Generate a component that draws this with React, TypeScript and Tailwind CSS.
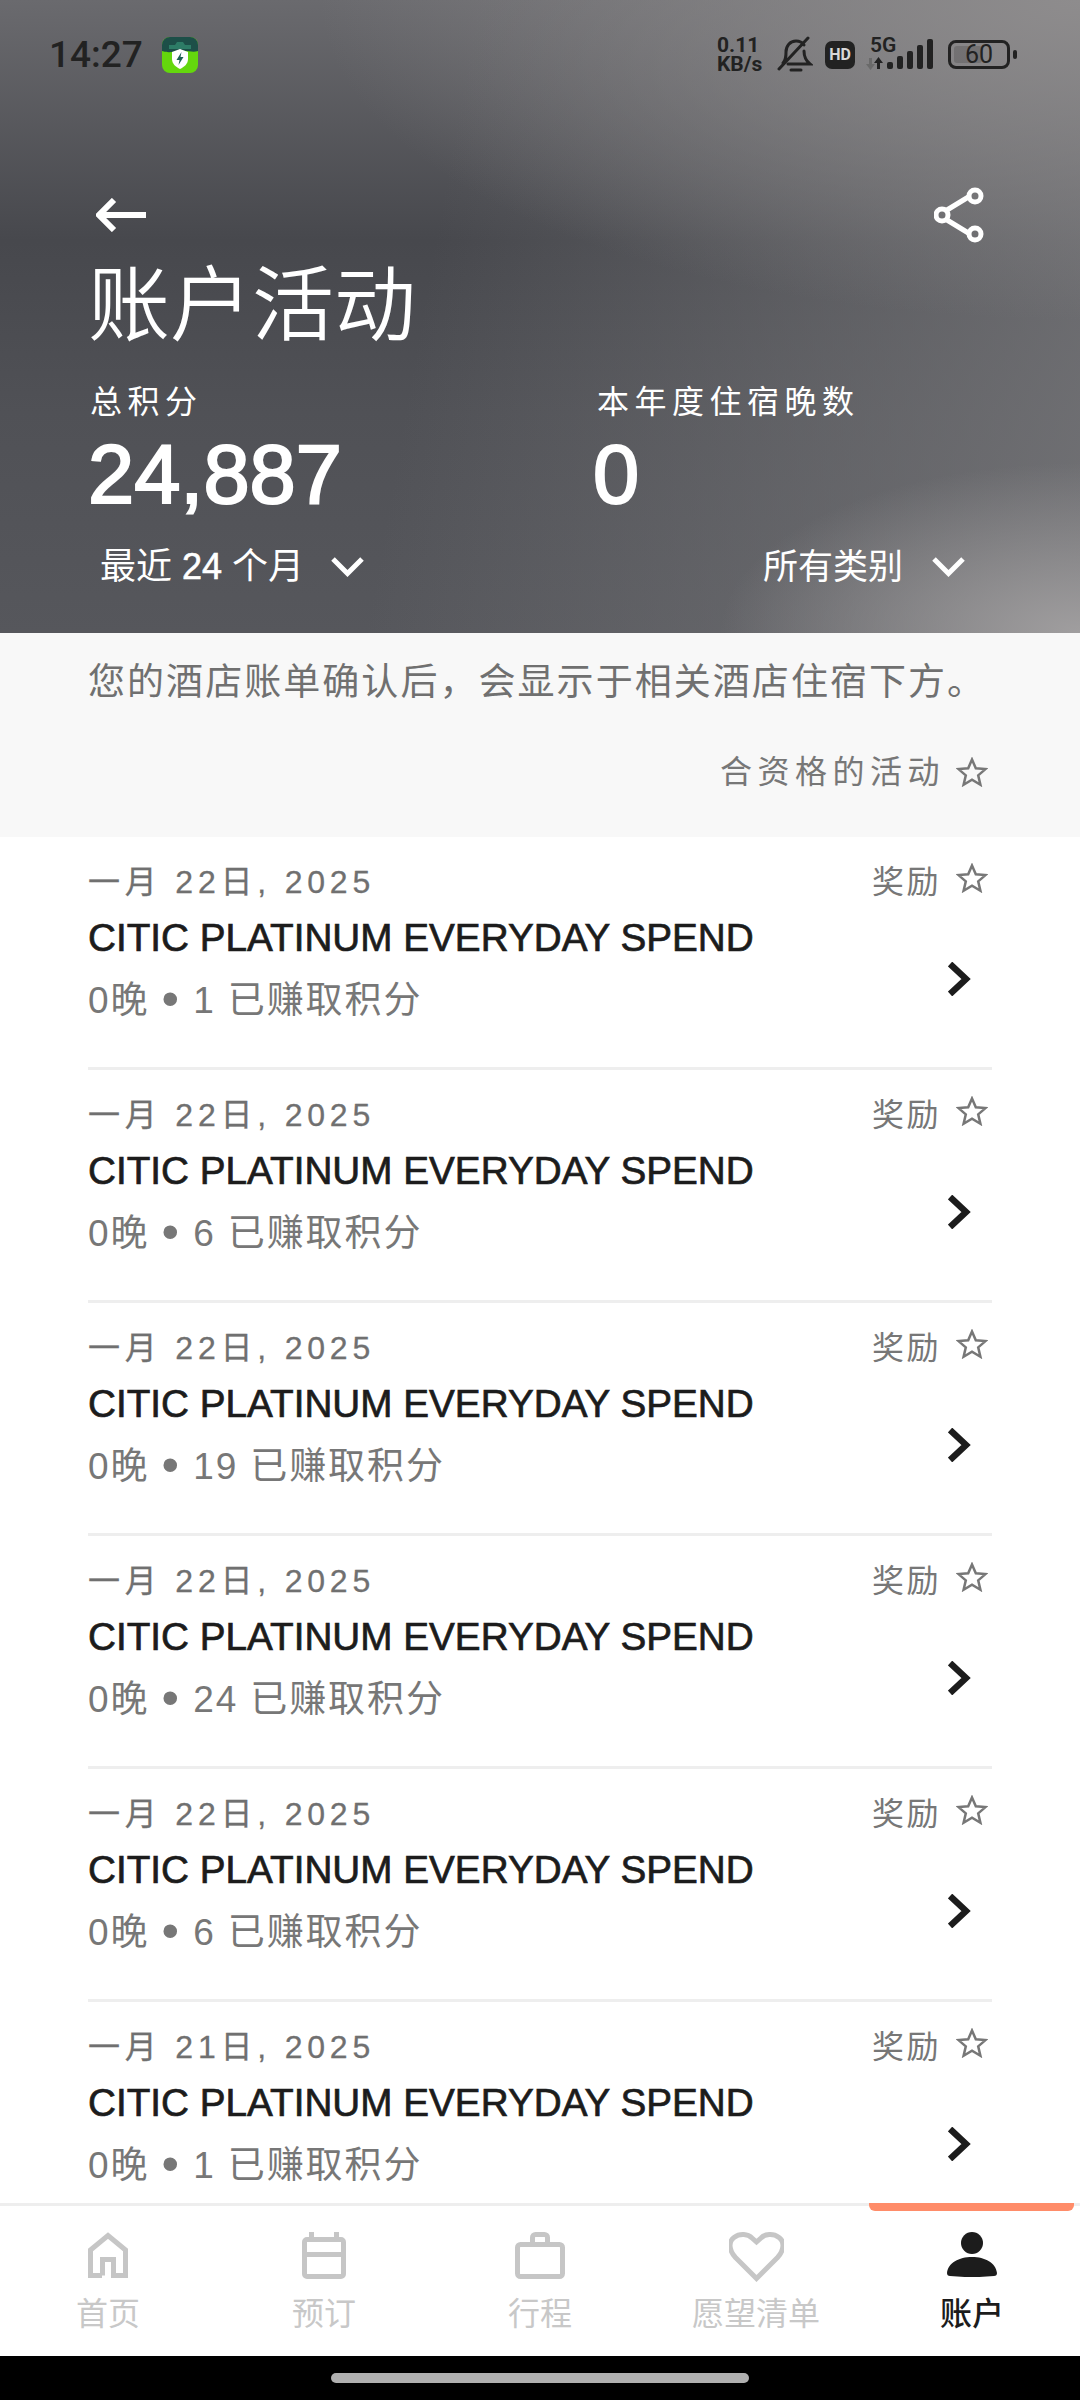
const activities = [
  { date: '一月 22日, 2025', points: 1 },
  { date: '一月 22日, 2025', points: 6 },
  { date: '一月 22日, 2025', points: 19 },
  { date: '一月 22日, 2025', points: 24 },
  { date: '一月 22日, 2025', points: 6 },
  { date: '一月 21日, 2025', points: 1 },
];

const tabs = [
  { label: '首页', icon: <HomeIcon /> },
  { label: '预订', icon: <CalendarIcon /> },
  { label: '行程', icon: <BagIcon /> },
  { label: '愿望清单', icon: <HeartIcon /> },
  { label: '账户', icon: <PersonIcon />, active: true },
];

function HomeIcon() {
  return (
    <svg width="40" height="46" viewBox="0 0 40 46" fill="none" stroke="#c6c6c6" strokeWidth="5">
      <path d="M14 43.5H2.5V18L20 3.5 37.5 18v25.5H25.500V27.500H14.500V43.500" />
    </svg>
  );
}

function CalendarIcon() {
  return (
    <svg width="44" height="47" viewBox="0 0 44 47" fill="none" stroke="#c6c6c6" strokeWidth="5">
      <rect x="2.500" y="7.500" width="39" height="37" rx="2.500" />
      <path d="M2 22.500h40M9.500 0v6M34.500 0v6" />
    </svg>
  );
}

function BagIcon() {
  return (
    <svg width="50" height="47" viewBox="0 0 50 47" fill="none" stroke="#c6c6c6" strokeWidth="5">
      <rect x="2.500" y="12.500" width="45" height="32" rx="3" />
      <path d="M17.500 11V5.500a3 3 0 0 1 3-3h9a3 3 0 0 1 3 3V11" />
    </svg>
  );
}

function HeartIcon() {
  return (
    <svg width="55" height="50" viewBox="0 0 55 50" fill="none" stroke="#c6c6c6" strokeWidth="5">
      <path d="M27.500 46.500 6.500 25.500C-.5 18-.5 9.500 5 5.500c6-4.500 14-3.500 18 .5l4.500 4 4.500-4c4-4 12-5 18-.5 5.500 4 5.500 12.500-1.500 20z" />
    </svg>
  );
}

function PersonIcon() {
  return (
    <svg width="50" height="45" viewBox="0 0 50 45" fill="#1c1c1c">
      <circle cx="25" cy="11" r="11" />
      <path d="M0 41C1 31 12 25 25 25s24 6 25 16c0 2-1 3-3 3-15 1.500-29 1.500-44 0-2 0-3-1-3-3z" />
    </svg>
  );
}

function Star({ color = '#777777' }: { color?: string }) {
  return (
    <svg width="32" height="30" viewBox="0 0 32 30" fill="none" stroke={color} strokeWidth="2.500" strokeLinejoin="miter">
      <path d="M16 2.500l3.800 8.800 9.700.8-7.300 6.300 2.200 9.300-8.400-5-8.400 5 2.200-9.300-7.300-6.300 9.700-.8z" />
    </svg>
  );
}

function Chevron() {
  return (
    <svg width="23" height="34" viewBox="0 0 23 34" fill="none" stroke="#1c1c1c" strokeWidth="6.500">
      <path d="M2 2l16 15L2 32" />
    </svg>
  );
}

function ChevronDown() {
  return (
    <svg width="33" height="20" viewBox="0 0 33 20" fill="none" stroke="#ffffff" strokeWidth="5">
      <path d="M2 2l14.500 14.500L31 2" />
    </svg>
  );
}

function StatusIcons() {
  return (
    <div className="flex items-center text-[#222222] font-['Roboto',sans-serif]">
      <div className="flex w-[49px] flex-col text-[21px] font-bold">
        <span className="h-[19px] leading-[19px]">0.11</span>
        <span className="h-[19px] leading-[19px]">KB/s</span>
      </div>
      <svg className="ml-[11px]" width="36" height="38" viewBox="0 0 36 38" fill="none" stroke="#222222" strokeWidth="3" strokeLinecap="round">
        <path d="M6 27c3-3 3-6 3-11 0-6 4-11 10-11 3 0 6 1 8 4M27 15c0 5 1 9 6 13H11M14 34h10M2 33 31 2" />
      </svg>
      <div className="ml-[12px] flex h-[28px] w-[30px] items-center justify-center rounded-[7px] bg-[#222222] text-[16px] font-bold text-[#d8d8d8]">
        HD
      </div>
      <div className="relative ml-[11px] h-[32px] w-[68px]">
        <span className="absolute top-[-4px] left-[4px] text-[21px] leading-[20px] font-semibold">5G</span>
        <svg className="absolute top-0 left-0" width="68" height="32" viewBox="0 0 68 32" fill="#222222">
          <path d="M3 19h3v6h3l-4.500 6L0 25h3z" fill="#6a6a6a" />
          <path d="M11 30h3v-6h3l-4.500-6L8 24h3z" />
          <rect x="21" y="23" width="6" height="7" rx="2" />
          <rect x="31" y="17" width="6" height="13" rx="2" />
          <rect x="41" y="12" width="6" height="18" rx="2" />
          <rect x="51" y="6" width="6" height="24" rx="2" />
          <rect x="61" y="0" width="6" height="30" rx="2" />
        </svg>
      </div>
      <div className="relative ml-[14px] flex h-[29px] w-[62px] items-center justify-center rounded-[8px] border-[3px] border-[#222222] text-[25px] font-normal">
        <div className="absolute top-[3px] bottom-[3px] left-[3px] w-[28px] rounded-[3px] bg-[#222222]/20" />
        <span className="relative">60</span>
      </div>
      <div className="ml-[3px] h-[9px] w-[4px] rounded-[2px] bg-[#222222]" />
    </div>
  );
}

function AppBadge() {
  return (
    <svg className="ml-[19px]" width="36" height="36" viewBox="0 0 36 36">
      <rect width="36" height="36" rx="8" fill="#64d70d" />
      <path d="M0 14V8a8 8 0 0 1 8-8h20a8 8 0 0 1 8 8v6c-6 2-10-1-18 0S6 16 0 14z" fill="#1d4f48" />
      <path d="M7 8h6l2-3h6l2 3h6v4H7z" fill="#2d7c66" />
      <path d="M18 12l8 3v7c0 5-4 8-8 10-4-2-8-5-8-10v-7z" fill="#ffffff" />
      <path d="M19.500 15l-5 8h3l-1 5 5-8h-3z" fill="#1d5f55" />
    </svg>
  );
}

function ActivityRow({ date, points }: { date: string; points: number }) {
  return (
    <div className="h-[233px] shrink-0 border-b-[3px] border-[#eeeeee] pt-[25px]">
      <div className="flex h-[40px] items-center justify-between">
        <span className="text-[32px] tracking-[4.800px] text-[#707070] [-webkit-text-stroke:0.3px_#707070]">{date}</span>
        <div className="flex items-center">
          <span className="text-[32px] tracking-[2.500px] text-[#777777]">奖励</span>
          <div className="mr-[4px] ml-[15px] -translate-y-[4px]">
            <Star />
          </div>
        </div>
      </div>
      <div className="flex items-center justify-between pr-[21px]">
        <div>
          <div className="mt-[12px] h-[48px] text-[38.700px] leading-[48px] font-normal text-[#1c1c1c] [-webkit-text-stroke:0.7px_#1c1c1c]">
            CITIC PLATINUM EVERYDAY SPEND
          </div>
          <div className="mt-[9px] h-[48px] text-[37px] leading-[48px] tracking-[1.900px] text-[#777777]">
            0晚 <span className="relative top-[3px] text-[50px] leading-none">•</span> {points} 已赚取积分
          </div>
        </div>
        <div className="mt-[37px]">
          <Chevron />
        </div>
      </div>
    </div>
  );
}

export default function App() {
  return (
    <div className="flex h-[2400px] w-[1080px] flex-col overflow-hidden bg-white font-['Liberation_Sans','Noto_Sans_CJK_SC',sans-serif]">
      {/* Header */}
      <div className="h-[633px] shrink-0 bg-[radial-gradient(ellipse_360px_170px_at_1080px_633px,#a09e9f_0%,#a09e9f00_100%),radial-gradient(ellipse_760px_320px_at_1080px_0px,#8e8c8d_0%,#8e8c8d00_100%),linear-gradient(100deg,#77777a00_40%,#77777acc_100%),linear-gradient(180deg,#6a6a6e_0%,#47484d_38%,#505156_65%,#56575c_100%)] text-white">
        <div className="flex h-[107px] items-center justify-between pt-[2px] pr-[63px] pl-[49px]">
          <div className="flex items-center">
            <span className="text-[37px] leading-none font-medium font-['Roboto',sans-serif] text-[#222222]">14:27</span>
            <AppBadge />
          </div>
          <StatusIcons />
        </div>

        <div className="mt-[78px] flex h-[60px] items-center justify-between pr-[96px] pl-[96px]">
          <svg width="50" height="34" viewBox="0 0 50 34" fill="none" stroke="#ffffff" strokeWidth="6">
            <path d="M50 17H4M18 2 3 17l15 15" />
          </svg>
          <svg width="50" height="56" viewBox="0 0 50 56" fill="none" stroke="#ffffff" strokeWidth="5">
            <path d="M13 23 36 9M13 33l23 14" />
            <circle cx="41" cy="9" r="6" />
            <circle cx="8" cy="28" r="6" />
            <circle cx="41" cy="47" r="6" />
          </svg>
        </div>

        <div className="mt-[11px] h-[97px] pl-[88px] text-[82px] leading-[100px] font-[350]">账户活动</div>

        <div className="mt-[29px] flex pl-[88px]">
          <div className="w-[509px]">
            <div className="h-[40px] pl-[2px] text-[32px] leading-[40px] tracking-[5.500px]">总积分</div>
            <div className="mt-[8px] h-[90px] text-[83px] leading-[90px] font-normal [-webkit-text-stroke:2.2px_#ffffff]">24,887</div>
          </div>
          <div>
            <div className="h-[40px] text-[32px] leading-[40px] tracking-[5.500px]">本年度住宿晚数</div>
            <div className="mt-[8px] -ml-[4px] h-[90px] text-[83px] leading-[90px] font-normal [-webkit-text-stroke:2.2px_#ffffff]">0</div>
          </div>
        </div>

        <div className="mt-[22px] flex h-[50px] items-center justify-between pr-[115px] pl-[100px]">
          <div className="flex items-center gap-[27px] text-[36px]">
            <span>
              最近 <span className="[-webkit-text-stroke:0.6px_#ffffff]">24</span> 个月
            </span>
            <ChevronDown />
          </div>
          <div className="flex items-center gap-[29px] text-[35px]">
            <span>所有类别</span>
            <ChevronDown />
          </div>
        </div>
      </div>

      {/* Notice */}
      <div className="h-[204px] shrink-0 bg-[#f8f8f8] px-[88px] pt-[26px]">
        <div className="h-[48px] text-[37px] leading-[48px] tracking-[2.050px] text-[#707070]">
          您的酒店账单确认后，会显示于相关酒店住宿下方。
        </div>
        <div className="mt-[45px] flex h-[40px] items-center justify-end">
          <span className="text-[32px] tracking-[5.500px] text-[#777777]">合资格的活动</span>
          <div className="mr-[4px] ml-[11px]">
            <Star />
          </div>
        </div>
      </div>

      {/* Activity list */}
      <div className="min-h-0 flex-1 overflow-hidden px-[88px]">
        {activities.map((item, i) => (
          <ActivityRow key={i} date={item.date} points={item.points} />
        ))}
      </div>

      {/* Bottom tabs */}
      <div className="relative h-[153px] shrink-0 border-t-[3px] border-[#eeeeee] bg-white">
        <div className="absolute top-[-3px] right-[6px] h-[8px] w-[205px] rounded-b-[6px] bg-[#ff8c69]" />
        <div className="grid grid-cols-5 pt-[26px]">
          {tabs.map((tab) => (
            <div key={tab.label} className="flex flex-col items-center">
              <div className="flex h-[54px] items-start">{tab.icon}</div>
              <span className={`mt-[7px] text-[32px] leading-[42px] ${tab.active ? 'font-medium text-[#1c1c1c]' : 'text-[#c8c8c8]'}`}>
                {tab.label}
              </span>
            </div>
          ))}
        </div>
      </div>

      {/* Gesture bar */}
      <div className="flex h-[44px] shrink-0 justify-center bg-black pt-[17px]">
        <div className="h-[10px] w-[418px] rounded-full bg-[#b0b0b0]" />
      </div>
    </div>
  );
}
